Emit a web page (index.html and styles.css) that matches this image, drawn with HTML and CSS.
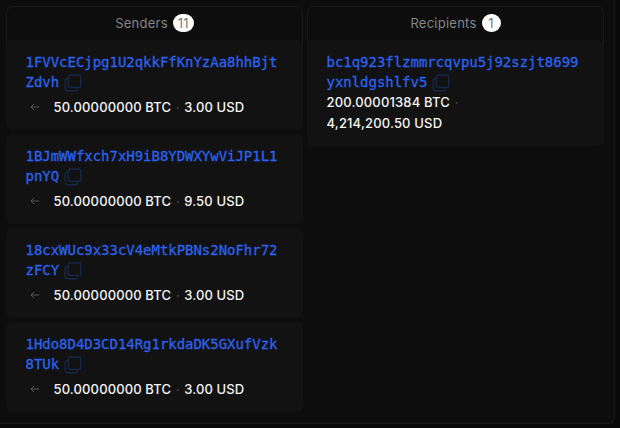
FILE: index.html
```html
<!DOCTYPE html>
<html lang="en">

<head>
    <meta charset="UTF-8">
    <meta name="viewport" content="width=device-width, initial-scale=1.0">
    <title>Transaction</title>
    <link rel="stylesheet" href="styles.css">
</head>

<body>

    <!-- Shared icons -->
    <svg class="icon-defs" width="0" height="0">
        <symbol id="copy" viewBox="0 0 18 18">
            <rect x="4.2" y="1" width="12.6" height="12.4" rx="2.2" />
            <path d="M4.2 4.4H3.4a2.2 2.2 0 0 0-2.2 2.2v7.7a2.4 2.4 0 0 0 2.4 2.4h7.8a2.2 2.2 0 0 0 2.2-2.2v-1.1" />
        </symbol>
        <symbol id="arrow" viewBox="0 0 10 8">
            <path d="M9.2 4H1M4 1L1 4l3 3" />
        </symbol>
    </svg>

    <div class="panel">
        <!-- Senders -->
        <div class="column">
            <div class="tab">Senders <span class="count">11</span></div>
            <div class="list">
                <div class="card">
                    <div class="address">1FVVcECjpg1U2qkkFfKnYzAa8hhBjtZdvh<svg class="copy"><use href="#copy" /></svg></div>
                    <div class="amount"><svg class="arrow"><use href="#arrow" /></svg>50.00000000 BTC<i class="dot">·</i>3.00 USD</div>
                </div>
                <div class="card">
                    <div class="address">1BJmWWfxch7xH9iB8YDWXYwViJP1L1pnYQ<svg class="copy"><use href="#copy" /></svg></div>
                    <div class="amount"><svg class="arrow"><use href="#arrow" /></svg>50.00000000 BTC<i class="dot">·</i>9.50 USD</div>
                </div>
                <div class="card">
                    <div class="address">18cxWUc9x33cV4eMtkPBNs2NoFhr72zFCY<svg class="copy"><use href="#copy" /></svg></div>
                    <div class="amount"><svg class="arrow"><use href="#arrow" /></svg>50.00000000 BTC<i class="dot">·</i>3.00 USD</div>
                </div>
                <div class="card">
                    <div class="address">1Hdo8D4D3CD14Rg1rkdaDK5GXufVzk8TUk<svg class="copy"><use href="#copy" /></svg></div>
                    <div class="amount"><svg class="arrow"><use href="#arrow" /></svg>50.00000000 BTC<i class="dot">·</i>3.00 USD</div>
                </div>
            </div>
        </div>

        <!-- Recipients -->
        <div class="column">
            <div class="tab">Recipients <span class="count">1</span></div>
            <div class="list">
                <div class="card">
                    <div class="address">bc1q923flzmmrcqvpu5j92szjt8699yxnldgshlfv5<svg class="copy"><use href="#copy" /></svg></div>
                    <div class="amount stacked">200.00001384 BTC<i class="dot">·</i><br>4,214,200.50 USD</div>
                </div>
            </div>
        </div>
    </div>

</body>

</html>
```

FILE: styles.css
```css
* {
    box-sizing: border-box;
}

body {
    margin: 0;
    height: 428px;
    overflow: hidden;
    background: #0a0a0a;
    font-family: Inter, sans-serif;
}

.icon-defs {
    display: none;
}

.panel {
    display: flex;
    gap: 4px;
    width: 615px;
    height: 424px;
    padding: 6px 0 0 6px;
    background: #0d0d0d;
    border-right: 1px solid #191919;
    border-bottom: 1px solid #191919;
    border-bottom-right-radius: 6px;
}

.column {
    width: 297px;
}

/* Column title, open at the bottom */
.tab {
    display: flex;
    justify-content: center;
    align-items: center;
    gap: 5px;
    height: 40px;
    padding-bottom: 7px;
    border: 1px solid #191919;
    border-bottom: 0;
    border-radius: 7px 7px 0 0;
    color: #858585;
    font-size: 13px;
    letter-spacing: 0.25px;
}

.count {
    min-width: 19px;
    height: 18px;
    padding: 0 5px;
    border-radius: 9px;
    background: #fff;
    color: #777;
    font-size: 13px;
    line-height: 18px;
    text-align: center;
}

.list {
    display: flex;
    flex-direction: column;
    gap: 4px;
    margin-top: -6px;
}

.card {
    padding: 12px 20px 12px 19.5px;
    border-radius: 6px;
    background: #121212;
}

.address {
    width: 254px;
    color: #2c62ee;
    font: 14px/20px "DejaVu Sans Mono", monospace;
    letter-spacing: -0.03px;
    -webkit-text-stroke: 0.3px #2c62ee;
    word-break: break-all;
}

.copy {
    width: 18px;
    height: 18px;
    margin: -2px 0 -2px 5px;
    vertical-align: -3px;
    fill: none;
    stroke: #142849;
    stroke-width: 1.4;
}

.amount {
    display: flex;
    align-items: center;
    height: 26px;
    padding-top: 4px;
    color: #f5f5f5;
    font-size: 13px;
    font-weight: 500;
    letter-spacing: 0.13px;
    line-height: 21px;
}

.amount.stacked {
    display: block;
    height: 42px;
    padding-top: 0;
    letter-spacing: 0.17px;
}

.arrow {
    width: 10px;
    height: 8px;
    margin: 0 14px 0 4px;
    fill: none;
    stroke: #555;
    stroke-width: 1;
}

.dot {
    margin: 0 4.5px;
    color: #444;
    font-style: normal;
}
```
